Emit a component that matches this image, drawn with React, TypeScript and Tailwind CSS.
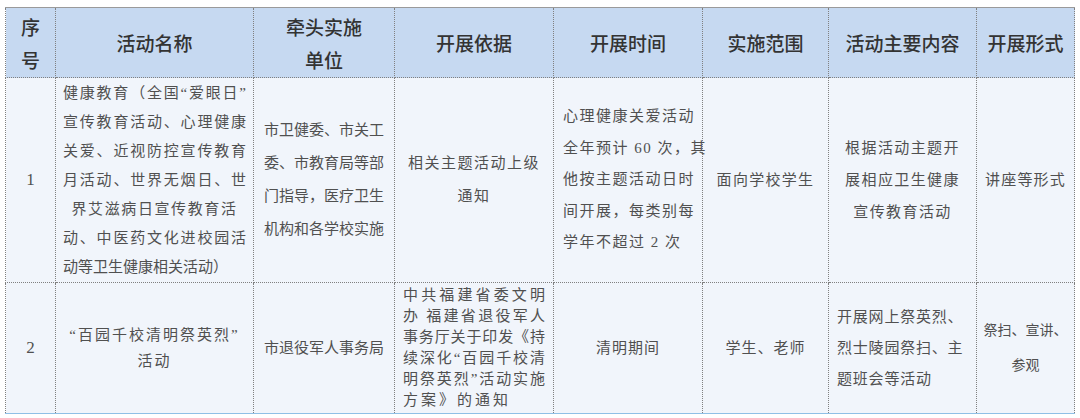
import React from 'react';

const serif = "font-['Liberation_Serif','Noto_Sans_CJK_SC',serif]";
const sans = "font-['Noto_Sans_CJK_SC','Liberation_Sans',sans-serif]";

const cols = [50, 198, 141, 159, 149, 126, 148, 98];

const headers: string[][] = [
  ['序', '号'],
  ['活动名称'],
  ['牵头实施', '单位'],
  ['开展依据'],
  ['开展时间'],
  ['实施范围'],
  ['活动主要内容'],
  ['开展形式'],
];

const cell = 'border border-dotted border-[#808080] align-middle p-0 whitespace-nowrap';

const Lines: React.FC<{ lines: string[]; className?: string; justify?: boolean }> = ({ lines, className = '', justify }) => (
  <div className={className}>
    {lines.map((l, i) => (
      <div
        key={i}
        className={justify && i < lines.length - 1 ? 'text-justify [text-align-last:justify]' : ''}
      >
        {l}
      </div>
    ))}
  </div>
);

export default function App() {
  return (
    <div className="w-[1080px] h-[418px] bg-white pt-[7px] pl-[5px]">
      <table className={`table-fixed border-collapse w-[1070px] text-[#505050] ${serif}`}>
        <colgroup>
          {cols.map((w, i) => (
            <col key={i} style={{ width: w }} />
          ))}
        </colgroup>
        <thead>
          <tr className="h-[70px] bg-[#c6d9f1] border-t border-t-[#9a9a9a]">
            {headers.map((h, i) => (
              <th key={i} className={`${cell} ${sans} text-[19px] leading-[33px] font-medium text-[#333] text-center`}>
                {h.map((l, j) => (
                  <div key={j}>{l}</div>
                ))}
              </th>
            ))}
          </tr>
        </thead>
        <tbody className="bg-[#f1f5fb]">
          <tr className="h-[205px]">
            <td className={`${cell} text-center text-[17px]`}>1</td>
            <td className={`${cell} text-[15px] leading-[29px] px-[7px]`}>
              <Lines
                justify
                lines={[
                  '健康教育（全国“爱眼日”',
                  '宣传教育活动、心理健康',
                  '关爱、近视防控宣传教育',
                  '月活动、世界无烟日、世',
                  '界艾滋病日宣传教育活',
                  '动、中医药文化进校园活',
                  '动等卫生健康相关活动）',
                ]}
                className="[&>div:nth-child(5)]:text-center [&>div:nth-child(5)]:[text-align-last:center] [&>div:nth-child(5)]:tracking-[1.6px]"
              />
            </td>
            <td className={`${cell} text-[15px] leading-[33px] text-center`}>
              <Lines lines={['市卫健委、市关工', '委、市教育局等部', '门指导，医疗卫生', '机构和各学校实施']} />
            </td>
            <td className={`${cell} text-[15px] tracking-[1.5px] leading-[33px] text-center`}>
              <Lines lines={['相关主题活动上级', '通知']} />
            </td>
            <td className={`${cell} text-[15px] tracking-[1.5px] leading-[31.5px] pl-[9px] text-left`}>
              <Lines lines={['心理健康关爱活动', '全年预计 60 次，其', '他按主题活动日时', '间开展，每类别每', '学年不超过 2 次']} />
            </td>
            <td className={`${cell} text-[15px] tracking-[1.3px] text-center`}>面向学校学生</td>
            <td className={`${cell} text-[15px] tracking-[1.4px] leading-[32px] text-center`}>
              <Lines lines={['根据活动主题开', '展相应卫生健康', '宣传教育活动']} />
            </td>
            <td className={`${cell} text-[15px] tracking-[1.2px] text-center`}>讲座等形式</td>
          </tr>
          <tr className="h-[131px] border-b border-b-[#8fc0e6]">
            <td className={`${cell} text-center text-[17px]`}>2</td>
            <td className={`${cell} text-[15px] tracking-[2px] leading-[26px] text-center`}>
              <Lines lines={['“百园千校清明祭英烈”', '活动']} />
            </td>
            <td className={`${cell} text-[15px] text-center`}>市退役军人事务局</td>
            <td className={`${cell} text-[15px] leading-[21px] px-[8px]`}>
              <Lines
                justify
                lines={[
                  '中共福建省委文明',
                  '办 福建省退役军人',
                  '事务厅关于印发《持',
                  '续深化“百园千校清',
                  '明祭英烈”活动实施',
                  '方案》的通知',
                ]}
                className="[&>div:last-child]:tracking-[3px]"
              />
            </td>
            <td className={`${cell} text-[15px] tracking-[1px] text-center`}>清明期间</td>
            <td className={`${cell} text-[15px] tracking-[1px] text-center`}>学生、老师</td>
            <td className={`${cell} text-[15px] tracking-[0.8px] leading-[31px] pl-[8px] text-left`}>
              <Lines lines={['开展网上祭英烈、', '烈士陵园祭扫、主', '题班会等活动']} />
            </td>
            <td className={`${cell} text-[14px] leading-[35px] text-center`}>
              <Lines lines={['祭扫、宣讲、', '参观']} />
            </td>
          </tr>
        </tbody>
      </table>
    </div>
  );
}
